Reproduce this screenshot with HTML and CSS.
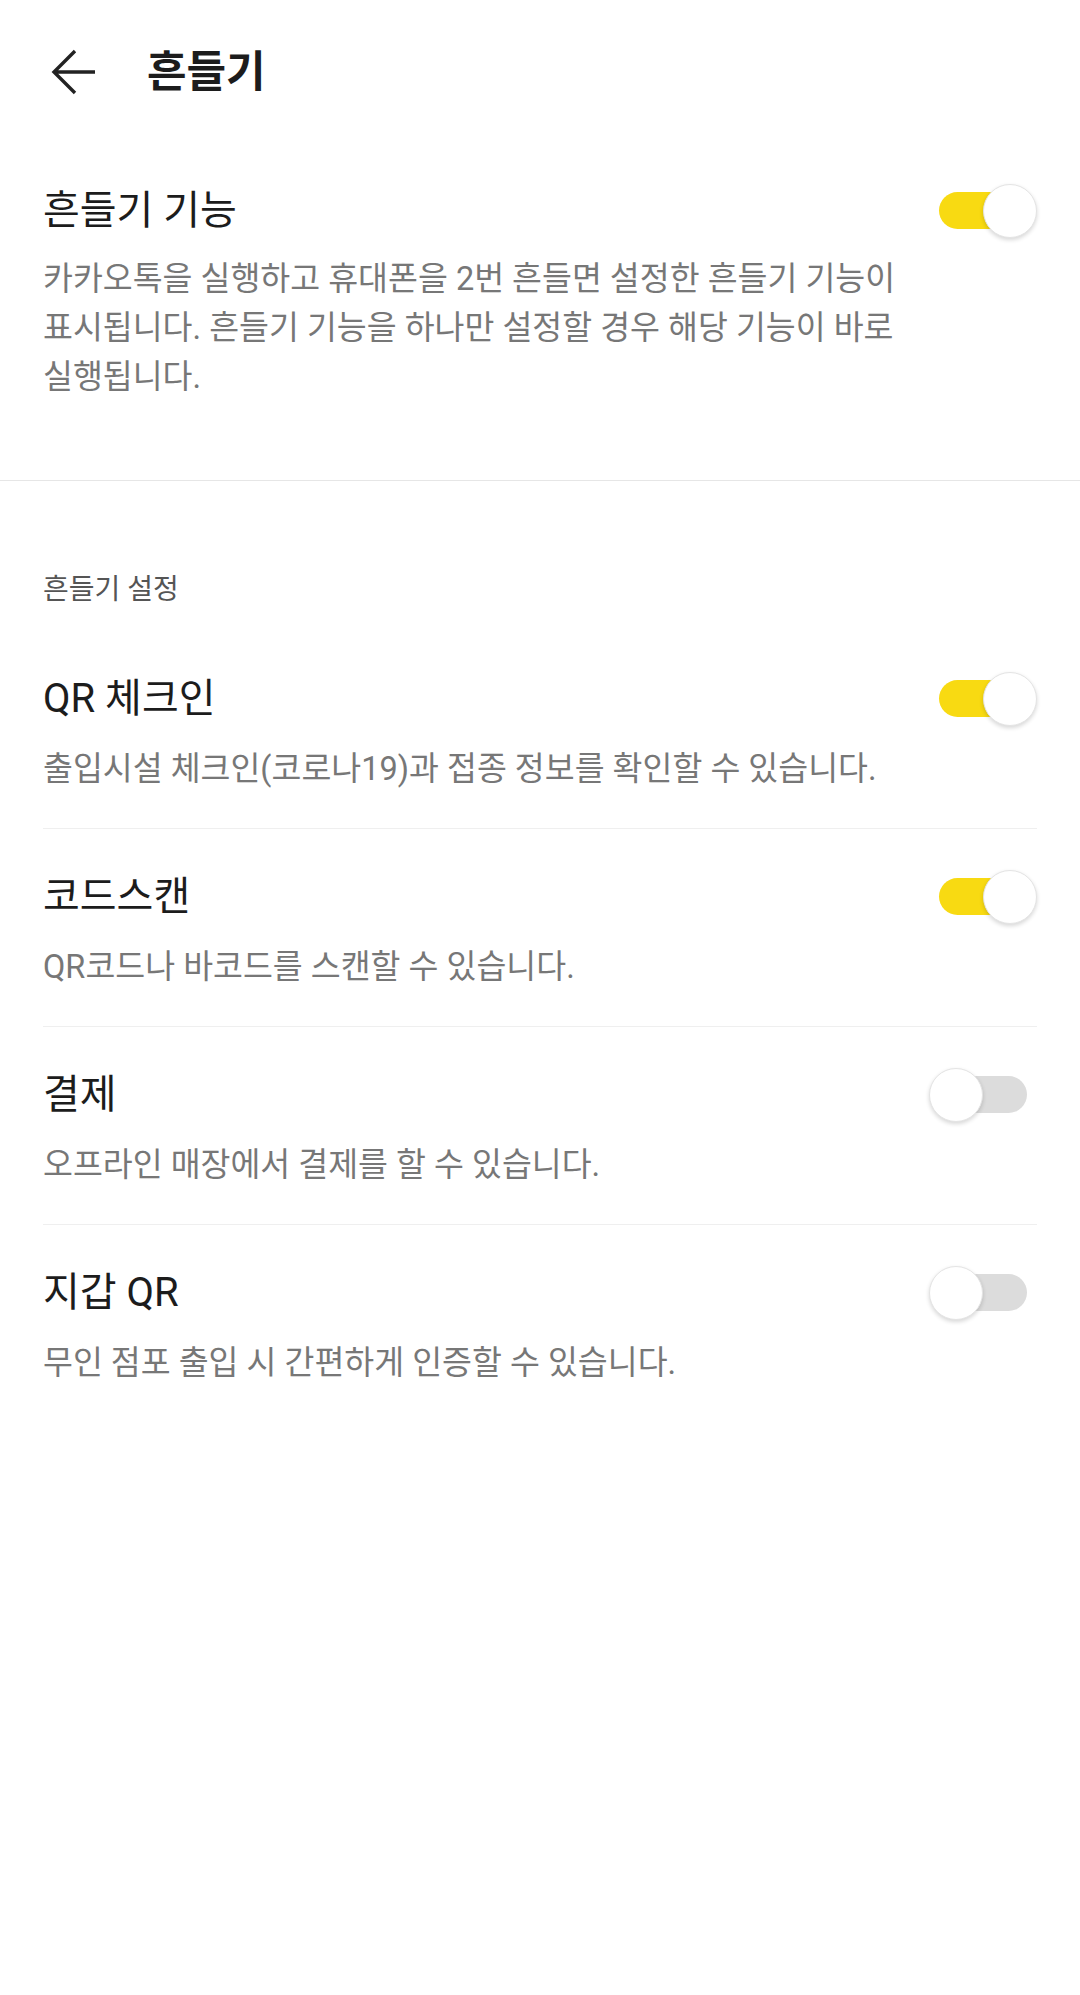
FILE: index.html
```html
<!DOCTYPE html>
<html lang="ko">
<head>
    <meta charset="UTF-8">
    <meta name="viewport" content="width=device-width, initial-scale=1.0">
    <title>흔들기</title>
    <link rel="stylesheet" href="styles.css">
</head>
<body>
    <header class="topbar">
        <svg class="back" width="48" height="48" viewBox="0 0 48 48">
            <path d="M25 3 L4 24 L25 45 M4 24 H45" fill="none" stroke="#222" stroke-width="3.4"/>
        </svg>
        <h1 class="page-title">흔들기</h1>
    </header>

    <section class="intro">
        <div class="row-head">
            <h2 class="item-title">흔들기 기능</h2>
            <span class="switch on"><span class="track"></span><span class="knob"></span></span>
        </div>
        <p class="intro-desc">카카오톡을 실행하고 휴대폰을 2번 흔들면 설정한 흔들기 기능이 표시됩니다. 흔들기 기능을 하나만 설정할 경우 해당 기능이 바로 실행됩니다.</p>
    </section>

    <section class="settings">
        <h3 class="section-label">흔들기 설정</h3>
        <ul class="items">
            <li class="item">
                <div class="row-head">
                    <h2 class="item-title">QR 체크인</h2>
                    <span class="switch on"><span class="track"></span><span class="knob"></span></span>
                </div>
                <p class="desc">출입시설 체크인(코로나19)과 접종 정보를 확인할 수 있습니다.</p>
            </li>
            <li class="item">
                <div class="row-head">
                    <h2 class="item-title">코드스캔</h2>
                    <span class="switch on"><span class="track"></span><span class="knob"></span></span>
                </div>
                <p class="desc">QR코드나 바코드를 스캔할 수 있습니다.</p>
            </li>
            <li class="item">
                <div class="row-head">
                    <h2 class="item-title">결제</h2>
                    <span class="switch"><span class="track"></span><span class="knob"></span></span>
                </div>
                <p class="desc">오프라인 매장에서 결제를 할 수 있습니다.</p>
            </li>
            <li class="item">
                <div class="row-head">
                    <h2 class="item-title">지갑 QR</h2>
                    <span class="switch"><span class="track"></span><span class="knob"></span></span>
                </div>
                <p class="desc">무인 점포 출입 시 간편하게 인증할 수 있습니다.</p>
            </li>
        </ul>
    </section>
</body>
</html>
```

FILE: styles.css
```css
body {
    margin: 0;
    min-height: 1995px;
    background-color: #fff;
    font-family: Roboto, "Noto Sans CJK KR", sans-serif;
    color: #1c1c1c;
    word-break: keep-all;
}
h1, h2, h3, p, ul {
    margin: 0;
    padding: 0;
}
.topbar {
    display: flex;
    align-items: center;
    height: 144px;
    padding-left: 50px;
}
.back {
    display: block;
}
.page-title {
    margin-left: 49px;
    font-size: 43px;
    font-weight: bold;
    line-height: 52px;
}
.intro {
    padding: 40px 43px 78px;
    border-bottom: 1px solid #e6e6e6;
}
.row-head {
    display: flex;
    justify-content: space-between;
    align-items: center;
    height: 54px;
}
.item-title {
    font-size: 40px;
    font-weight: normal;
    line-height: 50px;
}
.intro-desc {
    margin-top: 17px;
    max-width: 920px;
    font-size: 32.5px;
    line-height: 49px;
    color: #777;
}
.settings {
    padding: 91px 43px 0;
}
.section-label {
    font-size: 28px;
    font-weight: normal;
    line-height: 36px;
    color: #555;
}
.items {
    list-style: none;
    margin-top: 23px;
}
.item {
    padding: 41px 0 39px;
    border-bottom: 1px solid #efefef;
}
.item:last-child {
    border-bottom: none;
}
.desc {
    margin-top: 23px;
    font-size: 32.5px;
    line-height: 40px;
    color: #777;
}
.switch {
    position: relative;
    flex-shrink: 0;
    width: 108px;
    height: 54px;
}
.switch .track {
    position: absolute;
    left: 10px;
    top: 8px;
    width: 88px;
    height: 37px;
    border-radius: 19px;
    background-color: #dcdcdc;
}
.switch.on .track {
    background-color: #f8da12;
}
.switch .knob {
    position: absolute;
    left: 0;
    top: 0;
    width: 52px;
    height: 52px;
    border: 1px solid #e4e4e4;
    border-radius: 50%;
    background-color: #fff;
    box-shadow: 0 2px 4px rgba(0, 0, 0, 0.16);
}
.switch.on .knob {
    left: 54px;
}
```
